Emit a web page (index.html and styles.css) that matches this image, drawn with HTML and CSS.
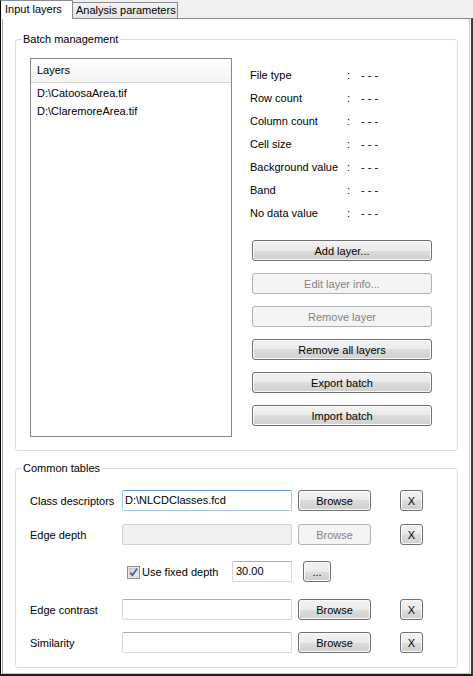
FILE: index.html
```html
<!DOCTYPE html>
<html>
<head>
<meta charset="utf-8">
<link rel="stylesheet" href="styles.css">
</head>
<body>
<div class="window">
  <div class="tabs">
    <div class="tab active">Input layers</div>
    <div class="tab">Analysis parameters</div>
  </div>
  <div class="panel">
    <fieldset class="group batch">
      <legend>Batch management</legend>
      <div class="batch-body">
        <div class="listbox">
          <div class="list-head">Layers</div>
          <div class="list-item">D:\CatoosaArea.tif</div>
          <div class="list-item">D:\ClaremoreArea.tif</div>
        </div>
        <div class="side">
          <div class="info">
            <span>File type</span><span>:</span><span>- - -</span>
            <span>Row count</span><span>:</span><span>- - -</span>
            <span>Column count</span><span>:</span><span>- - -</span>
            <span>Cell size</span><span>:</span><span>- - -</span>
            <span>Background value</span><span>:</span><span>- - -</span>
            <span>Band</span><span>:</span><span>- - -</span>
            <span>No data value</span><span>:</span><span>- - -</span>
          </div>
          <div class="buttons">
            <button class="btn wide">Add layer...</button>
            <button class="btn wide" disabled>Edit layer info...</button>
            <button class="btn wide" disabled>Remove layer</button>
            <button class="btn wide">Remove all layers</button>
            <button class="btn wide">Export batch</button>
            <button class="btn wide">Import batch</button>
          </div>
        </div>
      </div>
    </fieldset>

    <fieldset class="group common">
      <legend>Common tables</legend>
      <div class="row r1">
        <span class="label">Class descriptors</span>
        <div class="input focus">D:\NLCDClasses.fcd</div>
        <button class="btn browse">Browse</button>
        <button class="btn x">X</button>
      </div>
      <div class="row r2">
        <span class="label">Edge depth</span>
        <div class="input disabled"></div>
        <button class="btn browse" disabled>Browse</button>
        <button class="btn x">X</button>
      </div>
      <div class="row r3">
        <span class="label"></span>
        <div class="check-area">
          <svg class="checkbox" width="13" height="13" viewBox="0 0 13 13">
            <defs>
              <linearGradient id="cbg" x1="0" y1="0" x2="1" y2="1">
                <stop offset="0" stop-color="#cbcfd5"/>
                <stop offset="1" stop-color="#f6f6f6"/>
              </linearGradient>
            </defs>
            <rect x="0.5" y="0.5" width="12" height="12" fill="#fff" stroke="#8e8f8f"/>
            <rect x="2" y="2" width="9" height="9" fill="url(#cbg)" stroke="#aeb3b9" stroke-width="0.6"/>
            <path d="M3.2 6.6 L5.4 9.2 L10 2.8" fill="none" stroke="#4a5f97" stroke-width="1.8" stroke-linejoin="round"/>
          </svg>
          <span class="check-label">Use fixed depth</span>
        </div>
        <div class="input small">30.00</div>
        <button class="btn dots">...</button>
      </div>
      <div class="row r4">
        <span class="label">Edge contrast</span>
        <div class="input"></div>
        <button class="btn browse">Browse</button>
        <button class="btn x">X</button>
      </div>
      <div class="row r5">
        <span class="label">Similarity</span>
        <div class="input"></div>
        <button class="btn browse">Browse</button>
        <button class="btn x">X</button>
      </div>
    </fieldset>
  </div>
</div>
</body>
</html>
```

FILE: styles.css
```css
* { box-sizing: border-box; }

body {
  margin: 0;
  width: 473px;
  height: 676px;
  overflow: hidden;
  background: #f0f0f0;
  font-family: "Liberation Sans", Arial, sans-serif;
  font-size: 11px;
  color: #000;
}

.window {
  display: flex;
  flex-direction: column;
  height: 676px;
}

.tabs {
  display: flex;
  align-items: flex-end;
  height: 18px;
  position: relative;
  z-index: 1;
}

.tab {
  height: 16px;
  width: 105px;
  line-height: 15px;
  padding-left: 3px;
  border: 1px solid #898c95;
  border-bottom: none;
  border-left: none;
  background: linear-gradient(#f3f3f3, #e3e3e3);
  white-space: nowrap;
}

.tab.active {
  width: 73px;
  height: 19px;
  margin-bottom: -1px;
  padding-left: 4px;
  line-height: 16px;
  background: #fff;
  border-left: 1px solid #000;
}

.panel {
  flex: 1;
  background: #fff;
  border-top: 1px solid #898c95;
  border-left: 1px solid #000;
  border-right: 2px solid #3a3a3a;
  border-bottom: 2px solid #1e1e1e;
  box-shadow: inset 1px 0 #fff, inset 2px 0 #a0a0a0, inset -1px 0 #fff, inset -2px 0 #c8c8c8, inset 0 -1px #c8c8c8;
  padding: 14px 13px 0 14px;
}

.group {
  margin: 0;
  min-width: 0;
  border: 1px solid #d5dfe5;
  border-radius: 3px;
  padding: 0 14px;
}

.group legend {
  margin-left: -8px;
  padding: 0 2px 0 1px;
  line-height: 13px;
  height: 13px;
}

.batch {
  padding-top: 12px;
  padding-bottom: 13px;
}

.batch-body {
  display: flex;
  align-items: flex-start;
}

.listbox {
  width: 202px;
  height: 379px;
  border: 1px solid #828790;
  flex: none;
}

.list-head {
  height: 24px;
  line-height: 23px;
  padding-left: 6px;
  background: linear-gradient(#ffffff, #f3f4f6);
  border-bottom: 1px solid #d5d5d5;
}

.list-item {
  height: 18px;
  line-height: 18px;
  padding-left: 6px;
}

.list-head + .list-item {
  margin-top: 1px;
}

.side {
  margin-left: 18px;
  padding-top: 6px;
}

.info {
  display: grid;
  grid-template-columns: 97px 14px auto;
  grid-auto-rows: 23px;
  line-height: 23px;
  white-space: nowrap;
}

.buttons {
  margin-top: 15px;
  margin-left: 2px;
  display: flex;
  flex-direction: column;
  gap: 12px;
}

.btn {
  font-family: inherit;
  font-size: 11px;
  color: #000;
  height: 21px;
  padding: 0;
  margin: 0;
  border: 1px solid #707070;
  border-radius: 3px;
  background: linear-gradient(#f2f2f2 0%, #ebebeb 50%, #dddddd 50%, #cfcfcf 100%);
  box-shadow: inset 0 0 0 1px #fbfbfb;
  text-align: center;
  line-height: 18px;
}

.btn:disabled {
  border-color: #adb2b5;
  background: #f4f4f4;
  box-shadow: none;
  color: #838383;
}

.btn.wide { width: 180px; }

.common {
  margin-top: 11px;
  padding-top: 15px;
  padding-bottom: 14px;
}

.row {
  display: flex;
  align-items: center;
  height: 21px;
}

.r2 { margin-top: 13px; }
.r3 { margin-top: 16px; }
.r4 { margin-top: 17px; }
.r5 { margin-top: 12px; }

.label {
  width: 92px;
  flex: none;
  white-space: nowrap;
}

.input {
  width: 170px;
  height: 21px;
  flex: none;
  border: 1px solid #d4d6d9;
  border-top-color: #abadb3;
  border-radius: 2px;
  background: #fff;
  padding-left: 2px;
  line-height: 19px;
  white-space: nowrap;
  overflow: hidden;
}

.input.focus {
  border-color: #9fcbe9;
  border-top-color: #5b9dd9;
}

.input.disabled {
  background: #f0f0f0;
  border-color: #d0d0d0;
}

.input.small {
  width: 60px;
  padding-left: 3px;
}

.browse {
  width: 73px;
  margin-left: 6px;
}

.x {
  width: 23px;
  margin-left: 29px;
}

.check-area {
  width: 110px;
  flex: none;
  display: flex;
  align-items: center;
  padding-left: 5px;
}

.checkbox {
  flex: none;
  margin-top: 1px;
}

.check-label {
  margin-left: 2px;
  white-space: nowrap;
}

.dots {
  width: 28px;
  margin-left: 11px;
}
```
